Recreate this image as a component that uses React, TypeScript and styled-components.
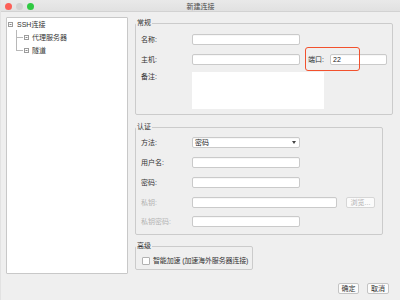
import styled, { createGlobalStyle } from "styled-components"

const GlobalStyle = createGlobalStyle`
    html, body {
        margin: 0;
        padding: 0;
        background: #efefef;
    }
    body {
        font-family: "Liberation Sans", "Noto Sans CJK SC", sans-serif;
        font-size: 7px;
        line-height: 9px;
        color: #333;
    }
`

const Window = styled.div`
    width: 400px;
    height: 300px;
    display: flex;
    flex-direction: column;
    background: #efefef;
    box-sizing: border-box;
    border-left: 1px solid #e2e2e2;
`

const TitleBar = styled.div`
    height: 11px;
    border-bottom: 1px solid #d2d2d2;
    background: linear-gradient(#e9e9e9, #e1e1e1);
    display: grid;
    grid-template-columns: 1fr auto 1fr;
    align-items: center;
`

const Lights = styled.div`
    display: flex;
    gap: 4px;
    padding-left: 4px;
    padding-top: 2px;
`

const Light = styled.span<{ $color: string }>`
    width: 7px;
    height: 7px;
    border-radius: 50%;
    background: ${p => p.$color};
`

const Title = styled.div`
    color: #4a4a4a;
    padding-top: 1px;
`

const Main = styled.div`
    display: flex;
    gap: 7px;
    padding: 5px 7px 0 5px;
    height: 257px;
`

const Tree = styled.div`
    width: 123px;
    height: 257px;
    box-sizing: border-box;
    background: #fff;
    border: 1px solid #c8c8c8;
    border-radius: 1px;
`

const TreeRow = styled.div<{ $depth: number; $first?: boolean }>`
    position: relative;
    height: 13px;
    display: flex;
    align-items: center;
    gap: ${p => (p.$depth ? 3 : 4)}px;
    padding-left: ${p => (p.$depth ? 17 : 1)}px;
    color: #333;

    ${p => p.$depth ? `
        &::before {
            content: "";
            position: absolute;
            left: 9px;
            top: ${p.$first ? -1 : -7}px;
            height: ${p.$first ? 7 : 13}px;
            width: 6px;
            border-left: 1px solid #b8b8b8;
            border-bottom: 1px solid #b8b8b8;
        }
    ` : ""}
`

const Right = styled.div`
    display: flex;
    flex-direction: column;
    padding-top: 1px;
`

const Group = styled.fieldset<{ $width: number; $pad: string; $mt?: number }>`
    margin: ${p => p.$mt ?? 0}px 0 0 0;
    width: ${p => p.$width}px;
    box-sizing: border-box;
    border: 1px solid #cbcbcb;
    border-radius: 2px;
    padding: ${p => p.$pad};
    display: flex;
    flex-direction: column;
    gap: 9px;
`

const Legend = styled.legend`
    font-size: 7px;
    line-height: 10px;
    padding: 0 1px;
    margin-left: -5px;
    color: #333;
`

const Row = styled.div<{ $shift?: number; $top?: boolean }>`
    display: flex;
    align-items: ${p => (p.$top ? "flex-start" : "center")};
    min-height: 11px;
    margin-top: ${p => p.$shift ?? 0}px;
`

const Label = styled.span<{ $disabled?: boolean }>`
    width: 51px;
    flex-shrink: 0;
    color: ${p => (p.$disabled ? "#b4b4b4" : "#333")};
`

const Input = styled.div<{ $width: number }>`
    width: ${p => p.$width}px;
    height: 11px;
    box-sizing: border-box;
    background: #fff;
    border: 1px solid #cacaca;
    border-radius: 2px;
    box-shadow: inset 0 1px 0 rgba(0, 0, 0, 0.03);
    padding-left: 2px;
    display: flex;
    align-items: center;
    color: #222;
`

const TextArea = styled.div`
    width: 132px;
    height: 37px;
    background: #fff;
`

const Select = styled(Input)`
    justify-content: space-between;
    padding-right: 3px;
`

const PortGroup = styled.div`
    position: relative;
    display: flex;
    align-items: center;
    margin-left: 8px;
`

const PortLabel = styled.span`
    width: 22px;
`

const Highlight = styled.div`
    position: absolute;
    left: -3px;
    top: -7px;
    width: 55px;
    height: 24px;
    box-sizing: border-box;
    border: 1.5px solid #f2512d;
    border-radius: 3px;
`

const SmallButton = styled.div<{ $width: number; $disabled?: boolean }>`
    width: ${p => p.$width}px;
    height: 11px;
    box-sizing: border-box;
    border: 1px solid ${p => (p.$disabled ? "#d6d6d6" : "#c4c4c4")};
    border-radius: 2px;
    background: #fbfbfb;
    color: ${p => (p.$disabled ? "#b0b0b0" : "#333")};
    display: flex;
    align-items: center;
    justify-content: center;
`

const Browse = styled(SmallButton)`
    margin-left: 9px;
`

const CheckRow = styled.div`
    display: flex;
    align-items: center;
    gap: 3px;
    height: 9px;
    padding-left: 1px;
    white-space: nowrap;
    letter-spacing: -0.15px;
`

const Box = styled.span`
    width: 6px;
    height: 6px;
    flex-shrink: 0;
    background: #fff;
    border: 1px solid #b2b2b2;
    border-radius: 1px;
`

const Footer = styled.div`
    display: flex;
    justify-content: flex-end;
    gap: 8px;
    padding: 9px 11px 0 0;
`

const MinusBox = () => (
    <svg width="5" height="5" viewBox="0 0 5 5">
        <rect x="0.5" y="0.5" width="4" height="4" fill="#fff" stroke="#9c9c9c" strokeWidth="1" />
        <line x1="1.5" y1="2.5" x2="3.5" y2="2.5" stroke="#8a8a8a" strokeWidth="1" />
    </svg>
)

const Caret = () => (
    <svg width="4" height="3" viewBox="0 0 4 3">
        <path d="M0 0 L4 0 L2 3 Z" fill="#444" />
    </svg>
)

export default function App() {
    return (
        <>
            <GlobalStyle />
            <Window>
                <TitleBar>
                    <Lights>
                        <Light $color="#fc5f57" />
                        <Light $color="#d2d2d2" />
                        <Light $color="#2fc942" />
                    </Lights>
                    <Title>新建连接</Title>
                    <div />
                </TitleBar>
                <Main>
                    <Tree>
                        <TreeRow $depth={0}><MinusBox />SSH连接</TreeRow>
                        <TreeRow $depth={1} $first><MinusBox />代理服务器</TreeRow>
                        <TreeRow $depth={1}><MinusBox />隧道</TreeRow>
                    </Tree>
                    <Right>
                        <Group $width={258} $pad="6px 4px 5px 5px">
                            <Legend>常规</Legend>
                            <Row>
                                <Label>名称:</Label>
                                <Input $width={108} />
                            </Row>
                            <Row>
                                <Label>主机:</Label>
                                <Input $width={108} />
                                <PortGroup>
                                    <PortLabel>端口:</PortLabel>
                                    <Input $width={57}>22</Input>
                                    <Highlight />
                                </PortGroup>
                            </Row>
                            <Row $top $shift={-2}>
                                <Label>备注:</Label>
                                <TextArea />
                            </Row>
                        </Group>
                        <Group $width={248} $pad="5px 4px 7px 5px" $mt={7}>
                            <Legend>认证</Legend>
                            <Row>
                                <Label>方法:</Label>
                                <Select $width={108}>密码<Caret /></Select>
                            </Row>
                            <Row>
                                <Label>用户名:</Label>
                                <Input $width={108} />
                            </Row>
                            <Row>
                                <Label>密码:</Label>
                                <Input $width={108} />
                            </Row>
                            <Row>
                                <Label $disabled>私钥:</Label>
                                <Input $width={145} />
                                <Browse $width={29} $disabled>浏览...</Browse>
                            </Row>
                            <Row $shift={-1}>
                                <Label $disabled>私钥密码:</Label>
                                <Input $width={108} />
                            </Row>
                        </Group>
                        <Group $width={116} $pad="5px 4px 4px 5px" $mt={6}>
                            <Legend>高级</Legend>
                            <CheckRow>
                                <Box />
                                智能加速 (加速海外服务器连接)
                            </CheckRow>
                        </Group>
                    </Right>
                </Main>
                <Footer>
                    <SmallButton $width={21}>确定</SmallButton>
                    <SmallButton $width={22}>取消</SmallButton>
                </Footer>
            </Window>
        </>
    )
}
